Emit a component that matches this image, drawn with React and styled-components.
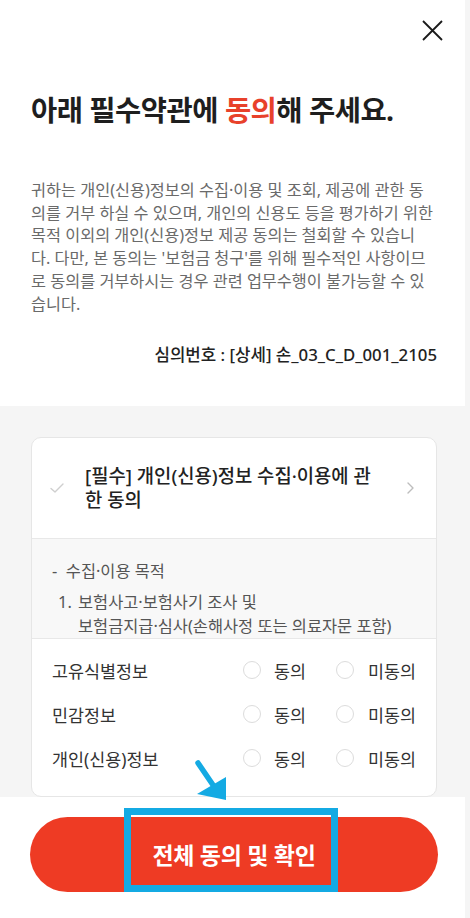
import React from 'react';
import styled, { createGlobalStyle } from 'styled-components';

const GlobalStyle = createGlobalStyle`
  html, body {
    margin: 0;
    padding: 0;
    background: #f5f5f5;
  }
  body {
    font-family: "Noto Sans", "Noto Sans CJK KR", sans-serif;
    -webkit-font-smoothing: antialiased;
  }
`;

const Page = styled.div`
  width: 470px;
  height: 918px;
  overflow: hidden;
  background: #f5f5f5;
`;

const Sheet = styled.div`
  position: relative;
  width: 465px;
  display: flex;
  flex-direction: column;
`;

const Top = styled.section`
  background: #fff;
  padding: 0 0 38px 31px;
  height: 406px;
  box-sizing: border-box;
`;

const CloseRow = styled.div`
  height: 60px;
  display: flex;
  justify-content: flex-end;
  align-items: flex-start;
  padding: 20px 22px 0 0;
  box-sizing: border-box;
`;

const CloseButton = styled.button`
  border: none;
  background: none;
  padding: 0;
  width: 21px;
  height: 21px;
  display: block;
  cursor: pointer;
`;

const Title = styled.h1`
  margin: 31px 0 0;
  font-size: 28.5px;
  line-height: 38px;
  font-weight: 700;
  letter-spacing: -0.5px;
  color: #1e1e1e;
`;

const Accent = styled.span`
  color: #e8412b;
`;

const Notice = styled.p`
  margin: 50px 0 0;
  font-size: 16.3px;
  line-height: 22.7px;
  color: #6a6a6a;
`;

const NoticeLine = styled.span`
  display: block;
  white-space: nowrap;
`;

const ReviewNo = styled.div`
  margin: 29px 28px 0 0;
  text-align: right;
  font-size: 16.8px;
  line-height: 22px;
  color: #222;
  font-weight: 500;
`;

const Middle = styled.section`
  background: #f5f5f5;
  padding: 31px 28px 0 31px;
  height: 391px;
  box-sizing: border-box;
`;

const Card = styled.div`
  background: #fff;
  border: 1px solid #e6e6e6;
  border-radius: 10px;
  overflow: hidden;
  height: 360px;
  box-sizing: border-box;
`;

const CardHeader = styled.div`
  height: 100px;
  display: flex;
  align-items: center;
  padding: 0 22px 0 18px;
  border-bottom: 1px solid #e8e8e8;
  gap: 21px;
`;

const CardTitle = styled.div`
  flex: 1;
  max-width: 292px;
  font-size: 18.8px;
  line-height: 23.5px;
  color: #222;
  font-weight: 500;
  padding-top: 1px;
`;

const Chevron = styled.div`
  margin-left: auto;
  display: flex;
`;

const Details = styled.div`
  background: #f8f8f8;
  padding: 21px 20px 0;
  height: 100px;
  box-sizing: border-box;
  border-bottom: 1px solid #e8e8e8;
  font-size: 16.4px;
  color: #555;
`;

const Heading = styled.div`
  line-height: 22px;
`;

const ListItem = styled.div`
  margin-top: 8px;
  display: flex;
  line-height: 24px;
  padding-left: 6px;
`;

const ListNum = styled.span`
  width: 20px;
  flex-shrink: 0;
`;

const Rows = styled.div`
  padding: 9px 20px 0;
`;

const Row = styled.div`
  height: 44px;
  display: flex;
  align-items: center;
  justify-content: space-between;
`;

const RowLabel = styled.span`
  font-size: 17.4px;
  color: #333;
`;

const Options = styled.div`
  display: flex;
  align-items: center;
  gap: 30px;
`;

const Option = styled.label`
  display: flex;
  align-items: center;
  gap: ${(p) => p.$gap}px;
  font-size: 17.4px;
  color: #333;
`;

const Radio = styled.span`
  width: 18px;
  height: 18px;
  border-radius: 50%;
  border: 1px solid #dcdcdc;
  box-sizing: border-box;
  background: #fff;
`;

const Bottom = styled.section`
  background: #fff;
  height: 121px;
  padding: 20px 27px 0 30px;
  box-sizing: border-box;
`;

const ConfirmButton = styled.button`
  width: 408px;
  height: 75px;
  border: none;
  border-radius: 38px;
  background: #ee3b24;
  color: #fff;
  font-family: inherit;
  font-size: 23px;
  font-weight: 700;
  letter-spacing: -0.3px;
  display: flex;
  align-items: center;
  justify-content: center;
  padding: 0 0 2px 0;
`;

const HighlightBox = styled.div`
  position: absolute;
  left: 124px;
  top: 808px;
  width: 214px;
  height: 84px;
  border: 7px solid #14aae3;
  box-sizing: border-box;
  pointer-events: none;
`;

const Arrow = styled.svg`
  position: absolute;
  left: 190px;
  top: 755px;
  pointer-events: none;
`;

const noticeLines = [
  '귀하는 개인(신용)정보의 수집·이용 및 조회, 제공에 관한 동',
  '의를 거부 하실 수 있으며, 개인의 신용도 등을 평가하기 위한',
  '목적 이외의 개인(신용)정보 제공 동의는 철회할 수 있습니',
  "다. 다만, 본 동의는 '보험금 청구'를 위해 필수적인 사항이므",
  '로 동의를 거부하시는 경우 관련 업무수행이 불가능할 수 있',
  '습니다.',
];

const consentRows = ['고유식별정보', '민감정보', '개인(신용)정보'];

const CloseIcon = () => (
  <svg width="21" height="21" viewBox="0 0 21 21">
    <path d="M1 1 L20 20 M20 1 L1 20" stroke="#1a1a1a" strokeWidth="1.8" fill="none" />
  </svg>
);

const CheckIcon = () => (
  <svg width="14" height="10" viewBox="0 0 14 10">
    <path d="M1 5.5 L5 9 L13 1" stroke="#cfcfcf" strokeWidth="1.4" fill="none" strokeLinecap="round" strokeLinejoin="round" />
  </svg>
);

const ChevronIcon = () => (
  <svg width="7" height="12" viewBox="0 0 7 12">
    <path d="M1 1 L6 6 L1 11" stroke="#bdbdbd" strokeWidth="1.4" fill="none" strokeLinecap="round" strokeLinejoin="round" />
  </svg>
);

const App = () => {
  return (
    <Page>
      <GlobalStyle />
      <Sheet>
        <Top>
          <CloseRow>
            <CloseButton aria-label="닫기">
              <CloseIcon />
            </CloseButton>
          </CloseRow>
          <Title>
            아래 필수약관에 <Accent>동의</Accent>해 주세요.
          </Title>
          <Notice>
            {noticeLines.map((line) => (
              <NoticeLine key={line}>{line}</NoticeLine>
            ))}
          </Notice>
          <ReviewNo>심의번호 : [상세] 손_03_C_D_001_2105</ReviewNo>
        </Top>

        <Middle>
          <Card>
            <CardHeader>
              <CheckIcon />
              <CardTitle>[필수] 개인(신용)정보 수집·이용에 관한 동의</CardTitle>
              <Chevron>
                <ChevronIcon />
              </Chevron>
            </CardHeader>
            <Details>
              <Heading>- &nbsp;수집·이용 목적</Heading>
              <ListItem>
                <ListNum>1.</ListNum>
                <span>
                  보험사고·보험사기 조사 및
                  <br />
                  보험금지급·심사(손해사정 또는 의료자문 포함)
                </span>
              </ListItem>
            </Details>
            <Rows>
              {consentRows.map((label) => (
                <Row key={label}>
                  <RowLabel>{label}</RowLabel>
                  <Options>
                    <Option $gap={13}>
                      <Radio />
                      동의
                    </Option>
                    <Option $gap={14}>
                      <Radio />
                      미동의
                    </Option>
                  </Options>
                </Row>
              ))}
            </Rows>
          </Card>
        </Middle>

        <Bottom>
          <ConfirmButton>전체 동의 및 확인</ConfirmButton>
        </Bottom>

        <HighlightBox />
        <Arrow width="44" height="50" viewBox="0 0 44 50">
          <path d="M8 8 L23 30" stroke="#14aae3" strokeWidth="5.5" strokeLinecap="round" fill="none" />
          <polygon points="7,39 36,22 36,45" fill="#14aae3" />
        </Arrow>
      </Sheet>
    </Page>
  );
};

export default App;
